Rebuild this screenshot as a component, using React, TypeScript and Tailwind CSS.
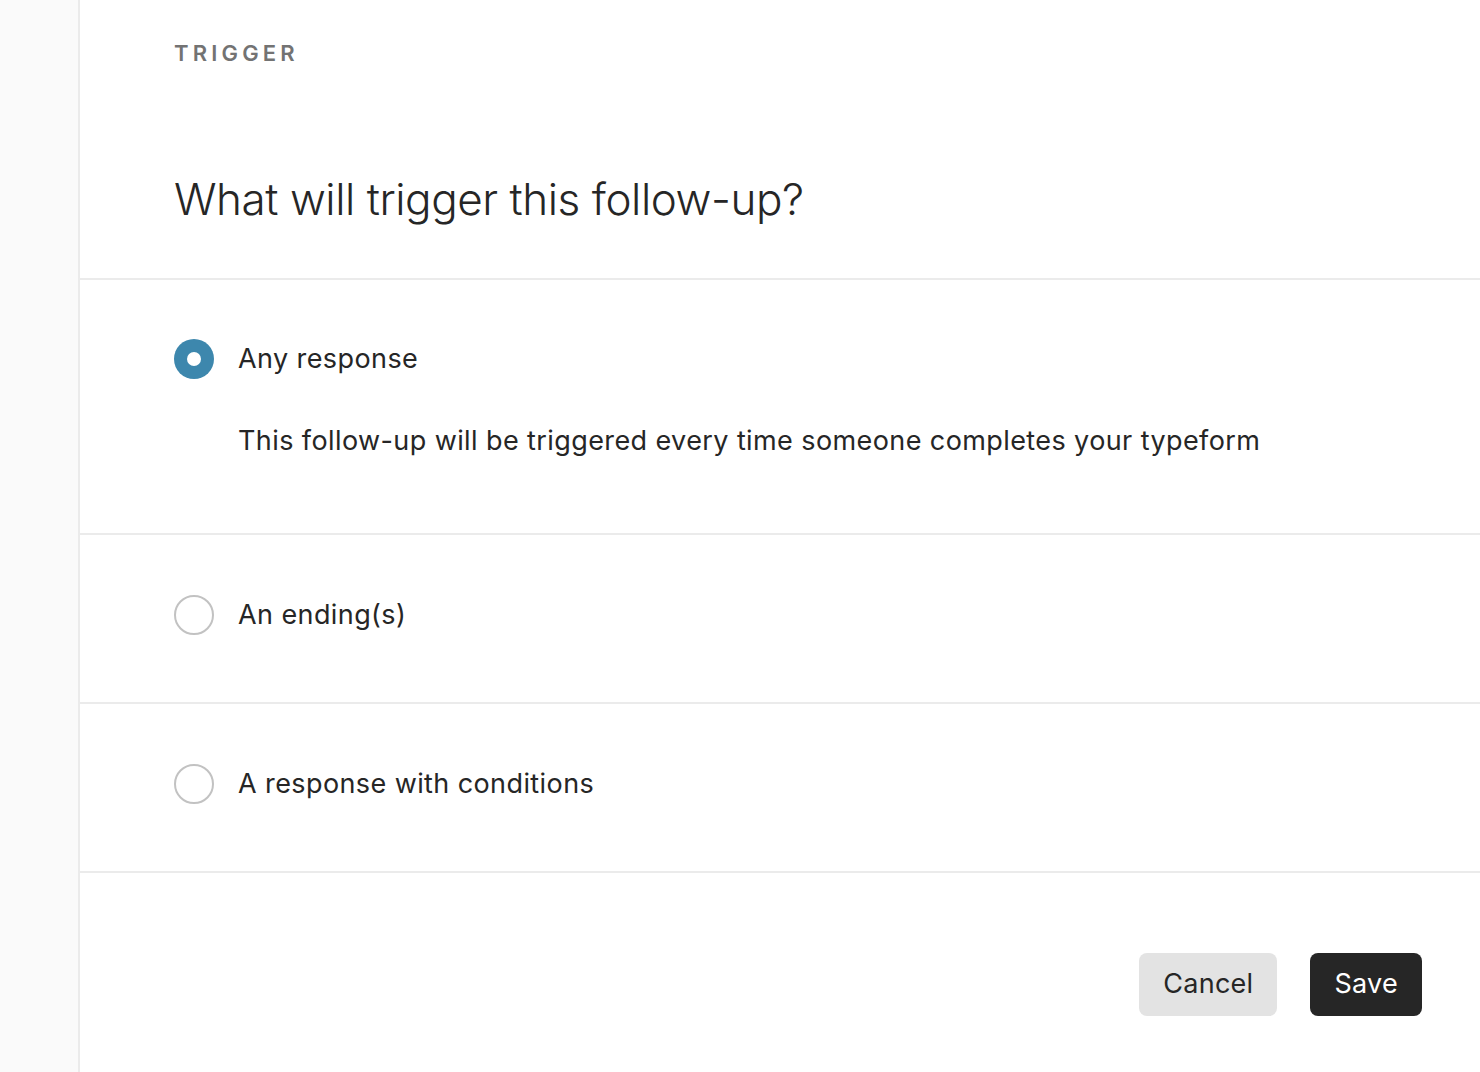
import React, { useState } from 'react'

const options = [
  {
    id: 'any',
    label: 'Any response',
    description: 'This follow-up will be triggered every time someone completes your typeform',
  },
  { id: 'ending', label: 'An ending(s)' },
  { id: 'conditions', label: 'A response with conditions' },
]

function Radio({ checked }: { checked: boolean }) {
  return checked ? (
    <span className="flex h-10 w-10 shrink-0 items-center justify-center rounded-full bg-[#3d87ad]">
      <span className="h-[14px] w-[14px] rounded-full bg-white" />
    </span>
  ) : (
    <span className="h-10 w-10 shrink-0 rounded-full border-2 border-[#c2c2c2] bg-white" />
  )
}

export default function App() {
  const [selected, setSelected] = useState('any')

  return (
    <div className="flex min-h-[1072px] bg-white font-['Inter',sans-serif] text-[#262626]">
      {/* Sidebar strip */}
      <div className="w-[80px] shrink-0 border-r-2 border-[#ebebeb] bg-[#fafafa]" />

      <div className="flex flex-1 flex-col">
        {/* Header */}
        <div className="border-b-2 border-[#ebebeb] pl-[94px] pt-[39px] pb-[51px]">
          <p className="text-[22px] font-semibold uppercase leading-[28px] tracking-[0.19em] text-[#737373]">
            Trigger
          </p>
          <h1 className="mt-[104px] text-[44px] font-light leading-[56px] tracking-[-0.01em] text-[#262626]">
            What will trigger this follow-up?
          </h1>
        </div>

        {/* Options */}
        {options.map((opt) => (
          <button
            key={opt.id}
            onClick={() => setSelected(opt.id)}
            className={`flex flex-col border-b-2 border-[#ebebeb] pl-[94px] text-left ${
              opt.description ? 'pt-[57px] pb-[72px]' : 'pt-[58px] pb-[65px]'
            }`}
          >
            <div className="flex items-center gap-[24px]">
              <Radio checked={selected === opt.id} />
              <span className="text-[27px] leading-[44px] tracking-[0.015em]">{opt.label}</span>
            </div>
            {opt.description && (
              <p className="mt-[40px] pl-[64px] text-[27px] leading-[40px] tracking-[0.015em]">
                {opt.description}
              </p>
            )}
          </button>
        ))}

        {/* Footer */}
        <div className="flex justify-end gap-[33px] pr-[58px] pt-[80px]">
          <button className="h-[63px] rounded-[8px] bg-[#e3e3e3] px-[24px] text-[27px] tracking-[0.01em] text-[#262626]">
            Cancel
          </button>
          <button className="h-[63px] rounded-[8px] bg-[#262626] px-[24px] text-[27px] tracking-[0.01em] text-white">
            Save
          </button>
        </div>
      </div>
    </div>
  )
}
